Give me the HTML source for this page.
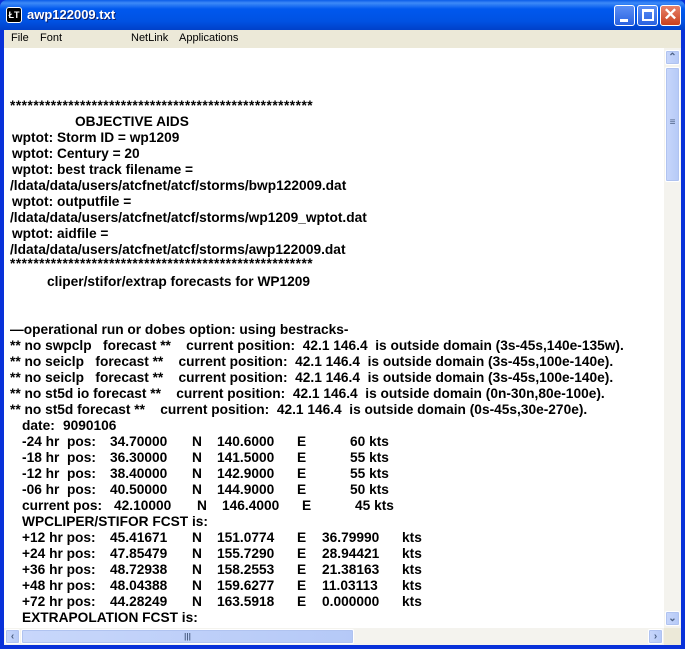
<!DOCTYPE html>
<html><head><meta charset="utf-8"><style>
*{margin:0;padding:0;box-sizing:border-box}
body{width:685px;height:649px;overflow:hidden;background:#0831d9;position:relative;font-family:"Liberation Sans",sans-serif}
.title{position:absolute;left:0;top:0;width:685px;height:30px;background:linear-gradient(#0a5ce8 0%,#3d8af7 10%,#0058ee 30%,#0052e3 70%,#0040c8 100%);border-radius:7px 7px 0 0}
.ttxt{position:absolute;left:27px;top:7px;color:#fff;font-size:13px;font-weight:bold;text-shadow:1px 1px #0a1f6c}
.ico{position:absolute;left:6px;top:7px;width:16px;height:16px;background:#000;border:1px solid #fff;border-radius:3px;color:#fff;font-size:9px;font-weight:bold;line-height:14px;text-align:center}
.btn{position:absolute;top:5px;width:21px;height:21px;border:1px solid #fff;border-radius:3px;background:linear-gradient(#5b8ff5,#2a62e0)}
.menu{position:absolute;left:4px;top:30px;width:677px;height:18px;background:#ece9d8;font-size:11px}
.menu span{position:absolute;top:2px;color:#000}
.content{position:absolute;left:4px;top:48px;width:660px;height:580px;background:#fff;overflow:hidden}
.l{position:absolute;font-size:14px;font-weight:bold;line-height:16px;white-space:pre;color:#000;transform:scaleX(0.98);transform-origin:left}
.st{letter-spacing:0.5px}
.vs{position:absolute;left:664px;top:48px;width:17px;height:580px;background:#f4f3ee}
.hs{position:absolute;left:4px;top:628px;width:660px;height:17px;background:#f4f3ee}
.sb{position:absolute;background:linear-gradient(90deg,#c8d7fb,#b5c9f7);border:1px solid #fff;border-radius:2px;box-shadow:0 0 0 1px #b0c3f0 inset;color:#4d6185;font-size:10px;text-align:center;font-weight:bold}
.corner{position:absolute;left:664px;top:628px;width:17px;height:17px;background:#ece9d8}
</style></head><body>
<div class="title">
<div class="ico">ŁT</div>
<div class="ttxt">awp122009.txt</div>
<div class="btn" style="left:614px"><div style="position:absolute;left:5px;top:13px;width:8px;height:3px;background:#fff"></div></div>
<div class="btn" style="left:637px"><div style="position:absolute;left:4px;top:3px;width:12px;height:12px;border:2px solid #fff;border-top-width:3px"></div></div>
<div class="btn" style="left:660px;background:linear-gradient(#e8826a,#c9401d)"><div style="position:absolute;left:0;top:-1px;width:19px;text-align:center;color:#fff;font-size:17px;font-weight:bold">✕</div></div>
</div>
<div class="menu"><span style="left:7px">File</span><span style="left:36px">Font</span><span style="left:127px">NetLink</span><span style="left:175px">Applications</span></div>
<div class="content">
<div class="l st" style="left:6px;top:49px">****************************************************</div>
<div class="l" style="left:71px;top:65px">OBJECTIVE AIDS</div>
<div class="l" style="left:8px;top:81px">wptot: Storm ID = wp1209</div>
<div class="l" style="left:8px;top:97px">wptot: Century = 20</div>
<div class="l" style="left:8px;top:113px">wptot: best track filename =</div>
<div class="l" style="left:6px;top:129px">/ldata/data/users/atcfnet/atcf/storms/bwp122009.dat</div>
<div class="l" style="left:8px;top:145px">wptot: outputfile =</div>
<div class="l" style="left:6px;top:161px">/ldata/data/users/atcfnet/atcf/storms/wp1209_wptot.dat</div>
<div class="l" style="left:8px;top:177px">wptot: aidfile =</div>
<div class="l" style="left:6px;top:193px">/ldata/data/users/atcfnet/atcf/storms/awp122009.dat</div>
<div class="l st" style="left:6px;top:207px">****************************************************</div>
<div class="l" style="left:43px;top:225px">cliper/stifor/extrap forecasts for WP1209</div>
<div class="l" style="left:6px;top:273px">—operational run or dobes option: using bestracks-</div>
<div class="l" style="left:6px;top:289px">** no swpclp   forecast **    current position:  42.1 146.4  is outside domain (3s-45s,140e-135w).</div>
<div class="l" style="left:6px;top:305px">** no seiclp   forecast **    current position:  42.1 146.4  is outside domain (3s-45s,100e-140e).</div>
<div class="l" style="left:6px;top:321px">** no seiclp   forecast **    current position:  42.1 146.4  is outside domain (3s-45s,100e-140e).</div>
<div class="l" style="left:6px;top:337px">** no st5d io forecast **    current position:  42.1 146.4  is outside domain (0n-30n,80e-100e).</div>
<div class="l" style="left:6px;top:353px">** no st5d forecast **    current position:  42.1 146.4  is outside domain (0s-45s,30e-270e).</div>
<div class="l" style="left:18px;top:369px">date:</div><div class="l" style="left:59px;top:369px">9090106</div>

<div class="l" style="left:18px;top:385px">-24 hr  pos:</div><div class="l" style="left:106px;top:385px">34.70000</div><div class="l" style="left:188px;top:385px">N</div><div class="l" style="left:213px;top:385px">140.6000</div><div class="l" style="left:293px;top:385px">E</div><div class="l" style="left:346px;top:385px">60 kts</div>
<div class="l" style="left:18px;top:401px">-18 hr  pos:</div><div class="l" style="left:106px;top:401px">36.30000</div><div class="l" style="left:188px;top:401px">N</div><div class="l" style="left:213px;top:401px">141.5000</div><div class="l" style="left:293px;top:401px">E</div><div class="l" style="left:346px;top:401px">55 kts</div>
<div class="l" style="left:18px;top:417px">-12 hr  pos:</div><div class="l" style="left:106px;top:417px">38.40000</div><div class="l" style="left:188px;top:417px">N</div><div class="l" style="left:213px;top:417px">142.9000</div><div class="l" style="left:293px;top:417px">E</div><div class="l" style="left:346px;top:417px">55 kts</div>
<div class="l" style="left:18px;top:433px">-06 hr  pos:</div><div class="l" style="left:106px;top:433px">40.50000</div><div class="l" style="left:188px;top:433px">N</div><div class="l" style="left:213px;top:433px">144.9000</div><div class="l" style="left:293px;top:433px">E</div><div class="l" style="left:346px;top:433px">50 kts</div>
<div class="l" style="left:18px;top:449px">current pos:</div><div class="l" style="left:110px;top:449px">42.10000</div><div class="l" style="left:193px;top:449px">N</div><div class="l" style="left:218px;top:449px">146.4000</div><div class="l" style="left:298px;top:449px">E</div><div class="l" style="left:351px;top:449px">45 kts</div>
<div class="l" style="left:18px;top:465px">WPCLIPER/STIFOR FCST is:</div>
<div class="l" style="left:18px;top:481px">+12 hr pos:</div><div class="l" style="left:106px;top:481px">45.41671</div><div class="l" style="left:188px;top:481px">N</div><div class="l" style="left:213px;top:481px">151.0774</div><div class="l" style="left:293px;top:481px">E</div><div class="l" style="left:318px;top:481px">36.79990</div><div class="l" style="left:398px;top:481px">kts</div>
<div class="l" style="left:18px;top:497px">+24 hr pos:</div><div class="l" style="left:106px;top:497px">47.85479</div><div class="l" style="left:188px;top:497px">N</div><div class="l" style="left:213px;top:497px">155.7290</div><div class="l" style="left:293px;top:497px">E</div><div class="l" style="left:318px;top:497px">28.94421</div><div class="l" style="left:398px;top:497px">kts</div>
<div class="l" style="left:18px;top:513px">+36 hr pos:</div><div class="l" style="left:106px;top:513px">48.72938</div><div class="l" style="left:188px;top:513px">N</div><div class="l" style="left:213px;top:513px">158.2553</div><div class="l" style="left:293px;top:513px">E</div><div class="l" style="left:318px;top:513px">21.38163</div><div class="l" style="left:398px;top:513px">kts</div>
<div class="l" style="left:18px;top:529px">+48 hr pos:</div><div class="l" style="left:106px;top:529px">48.04388</div><div class="l" style="left:188px;top:529px">N</div><div class="l" style="left:213px;top:529px">159.6277</div><div class="l" style="left:293px;top:529px">E</div><div class="l" style="left:318px;top:529px">11.03113</div><div class="l" style="left:398px;top:529px">kts</div>
<div class="l" style="left:18px;top:545px">+72 hr pos:</div><div class="l" style="left:106px;top:545px">44.28249</div><div class="l" style="left:188px;top:545px">N</div><div class="l" style="left:213px;top:545px">163.5918</div><div class="l" style="left:293px;top:545px">E</div><div class="l" style="left:318px;top:545px">0.000000</div><div class="l" style="left:398px;top:545px">kts</div>
<div class="l" style="left:18px;top:561px">EXTRAPOLATION FCST is:</div>
</div>
<div class="vs">
<div class="sb" style="left:1px;top:2px;width:15px;height:15px;line-height:13px">⌃</div>
<div class="sb" style="left:1px;top:19px;width:15px;height:115px;line-height:110px">≡</div>
<div class="sb" style="left:1px;top:563px;width:15px;height:15px;line-height:13px">⌄</div>
</div>
<div class="hs">
<div class="sb" style="left:1px;top:1px;width:15px;height:15px;line-height:14px">‹</div>
<div class="sb" style="left:17px;top:1px;width:333px;height:15px;line-height:14px;font-size:8px">|||</div>
<div class="sb" style="left:644px;top:1px;width:15px;height:15px;line-height:14px">›</div>
</div>
<div class="corner"></div>
</body></html>
